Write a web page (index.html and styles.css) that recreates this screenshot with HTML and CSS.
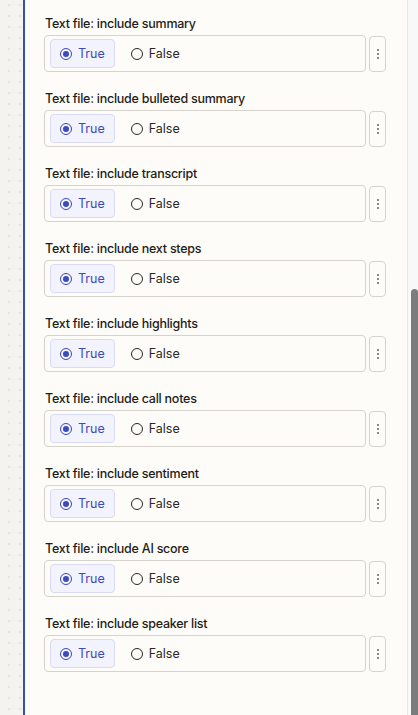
FILE: index.html
```html
<!DOCTYPE html>
<html>
<head>
<meta charset="utf-8">
<link rel="stylesheet" href="styles.css">
</head>
<body>
<div class="page">
  <div class="rail"></div>
  <div class="panel">
    <div class="field">
      <div class="label">Text file: include summary</div>
      <div class="row">
        <div class="choices">
          <div class="opt on"><span class="radio"></span>True</div>
          <div class="opt"><span class="radio"></span>False</div>
        </div>
        <div class="kebab"><span></span><span></span><span></span></div>
      </div>
    </div>
    <div class="field">
      <div class="label">Text file: include bulleted summary</div>
      <div class="row">
        <div class="choices">
          <div class="opt on"><span class="radio"></span>True</div>
          <div class="opt"><span class="radio"></span>False</div>
        </div>
        <div class="kebab"><span></span><span></span><span></span></div>
      </div>
    </div>
    <div class="field">
      <div class="label">Text file: include transcript</div>
      <div class="row">
        <div class="choices">
          <div class="opt on"><span class="radio"></span>True</div>
          <div class="opt"><span class="radio"></span>False</div>
        </div>
        <div class="kebab"><span></span><span></span><span></span></div>
      </div>
    </div>
    <div class="field">
      <div class="label">Text file: include next steps</div>
      <div class="row">
        <div class="choices">
          <div class="opt on"><span class="radio"></span>True</div>
          <div class="opt"><span class="radio"></span>False</div>
        </div>
        <div class="kebab"><span></span><span></span><span></span></div>
      </div>
    </div>
    <div class="field">
      <div class="label">Text file: include highlights</div>
      <div class="row">
        <div class="choices">
          <div class="opt on"><span class="radio"></span>True</div>
          <div class="opt"><span class="radio"></span>False</div>
        </div>
        <div class="kebab"><span></span><span></span><span></span></div>
      </div>
    </div>
    <div class="field">
      <div class="label">Text file: include call notes</div>
      <div class="row">
        <div class="choices">
          <div class="opt on"><span class="radio"></span>True</div>
          <div class="opt"><span class="radio"></span>False</div>
        </div>
        <div class="kebab"><span></span><span></span><span></span></div>
      </div>
    </div>
    <div class="field">
      <div class="label">Text file: include sentiment</div>
      <div class="row">
        <div class="choices">
          <div class="opt on"><span class="radio"></span>True</div>
          <div class="opt"><span class="radio"></span>False</div>
        </div>
        <div class="kebab"><span></span><span></span><span></span></div>
      </div>
    </div>
    <div class="field">
      <div class="label">Text file: include AI score</div>
      <div class="row">
        <div class="choices">
          <div class="opt on"><span class="radio"></span>True</div>
          <div class="opt"><span class="radio"></span>False</div>
        </div>
        <div class="kebab"><span></span><span></span><span></span></div>
      </div>
    </div>
    <div class="field">
      <div class="label">Text file: include speaker list</div>
      <div class="row">
        <div class="choices">
          <div class="opt on"><span class="radio"></span>True</div>
          <div class="opt"><span class="radio"></span>False</div>
        </div>
        <div class="kebab"><span></span><span></span><span></span></div>
      </div>
    </div>
  </div>
  <div class="track"><div class="thumb"></div></div>
</div>
</body>
</html>
```
FILE: styles.css
```css
html, body {
  margin: 0;
  padding: 0;
  height: 100%;
  overflow: hidden;
}
body {
  font-family: Inter, "Noto Sans", sans-serif;
  background: #fdfcf8;
}
.page {
  display: flex;
  height: 715px;
}
.rail {
  width: 23px;
  flex: none;
  background-color: #f4f3ef;
  background-image: radial-gradient(circle, #cdcbc4 0.7px, transparent 1.1px);
  background-size: 11px 11px;
  background-position: 3.5px -0.5px;
  border-right: 2px solid #3d4ab9;
}
.panel {
  flex: 1;
  background: #fdfcf8;
  padding: 16px 21px 0 19px;
}
.field {
  margin-bottom: 19px;
}
.label {
  font-size: 12.5px;
  letter-spacing: -0.25px;
  line-height: 16px;
  font-weight: 500;
  color: #1f1d19;
  padding-left: 1px;
  margin-bottom: 3px;
}
.row {
  display: flex;
  gap: 3px;
}
.choices {
  flex: 1;
  height: 35px;
  border: 1px solid #d6d3cc;
  border-radius: 4px;
  display: flex;
  align-items: center;
  gap: 6px;
  padding: 0 5px;
}
.opt {
  height: 27px;
  display: flex;
  align-items: center;
  gap: 6px;
  padding: 0 9px;
  border: 1px solid transparent;
  border-radius: 4px;
  font-size: 12.5px;
  color: #2a2824;
}
.opt.on {
  background: #f3f3fd;
  border-color: #d9dbf6;
  color: #3d4ab9;
}
.radio {
  width: 10px;
  height: 10px;
  border: 1.5px solid #2a2824;
  border-radius: 50%;
  flex: none;
  position: relative;
}
.opt.on .radio {
  border-color: #3d4ab9;
}
.opt.on .radio::after {
  content: "";
  position: absolute;
  left: 2px;
  top: 2px;
  width: 6px;
  height: 6px;
  border-radius: 50%;
  background: #3d4ab9;
}
.kebab {
  width: 15px;
  height: 34px;
  margin-top: 1px;
  border: 1px solid #d6d3cc;
  border-radius: 4px;
  display: flex;
  flex-direction: column;
  align-items: center;
  justify-content: center;
  gap: 2px;
}
.kebab span {
  width: 2px;
  height: 2px;
  border-radius: 50%;
  background: #646260;
}
.track {
  width: 11px;
  flex: none;
  background: #f8f8f8;
  border-left: 1px solid #e8e8e8;
  display: flex;
  flex-direction: column;
  padding-top: 289px;
  box-sizing: border-box;
}
.thumb {
  flex: 1;
  margin-left: 3px;
  width: 7px;
  background: #7c7c7c;
  border-radius: 4px 4px 0 0;
}
```
